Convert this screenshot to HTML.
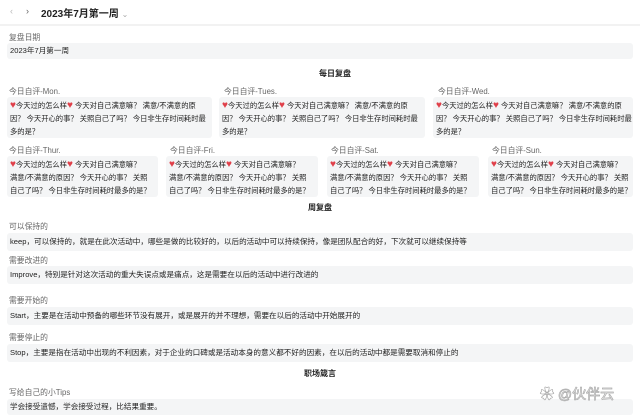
<!DOCTYPE html>
<html><head><meta charset="utf-8"><style>
*{margin:0;padding:0;box-sizing:border-box}
body{width:640px;height:415px;overflow:hidden;background:#fff;font-family:"Liberation Sans","Noto Sans CJK SC",sans-serif;color:#333;position:relative;font-size:8px}
.a{position:absolute;white-space:nowrap}
.lbl{color:#666;font-size:7.8px}
.box{position:absolute;background:#f4f5f6;border-radius:3px;font-size:7.3px;line-height:13px;padding:2px 3px;color:#222;white-space:nowrap;overflow:hidden}
.h{position:absolute;left:0;width:640px;text-align:center;font-weight:bold;font-size:8px;color:#222}
.r{color:#e0404a;font-size:10px;line-height:10px}
.s{position:absolute;left:7px;width:626px;height:18px;background:#f4f5f6;border-radius:3px;font-size:7.6px;line-height:18px;padding-left:3px;color:#222}
</style></head><body>
<div class="a" style="left:10px;top:6px;color:#bbb;font-size:9px">‹</div>
<div class="a" style="left:26px;top:6px;color:#666;font-size:9px">›</div>
<div class="a" style="left:41px;top:5px;font-weight:bold;font-size:10px;color:#222">2023年7月第一周 <span style="color:#aaa;font-weight:normal;font-size:8px">⌄</span></div>
<div style="position:absolute;left:0;top:24px;width:640px;height:2px;background:#f2f2f2"></div>
<div class="a lbl" style="left:9px;top:32px">复盘日期</div>
<div class="s" style="top:43px;height:16px;line-height:16px">2023年7月第一周</div>
<div class="h" style="top:68px;padding-left:30px">每日复盘</div>

<div class="a lbl" style="left:9px;top:86px">今日自评-Mon.</div>
<div class="a lbl" style="left:224px;top:86px">今日自评-Tues.</div>
<div class="a lbl" style="left:438px;top:86px">今日自评-Wed.</div>
<div class="box" style="left:7px;top:97px;width:205px;height:41px"><span class="r">♥</span>今天过的怎么样<span class="r">♥</span> 今天对自己满意嘛？ 满意/不满意的原<br>因？ 今天开心的事？ 关照自己了吗？ 今日非生存时间耗时最<br>多的是？</div>
<div class="box" style="left:219px;top:97px;width:206px;height:41px"><span class="r">♥</span>今天过的怎么样<span class="r">♥</span> 今天对自己满意嘛？ 满意/不满意的原<br>因？ 今天开心的事？ 关照自己了吗？ 今日非生存时间耗时最<br>多的是？</div>
<div class="box" style="left:433px;top:97px;width:200px;height:41px"><span class="r">♥</span>今天过的怎么样<span class="r">♥</span> 今天对自己满意嘛？ 满意/不满意的原<br>因？ 今天开心的事？ 关照自己了吗？ 今日非生存时间耗时最<br>多的是？</div>

<div class="a lbl" style="left:9px;top:145px">今日自评-Thur.</div>
<div class="a lbl" style="left:170px;top:145px">今日自评-Fri.</div>
<div class="a lbl" style="left:331px;top:145px">今日自评-Sat.</div>
<div class="a lbl" style="left:492px;top:145px">今日自评-Sun.</div>
<div class="box" style="left:7px;top:156px;width:151px;height:41px"><span class="r">♥</span>今天过的怎么样<span class="r">♥</span> 今天对自己满意嘛？<br>满意/不满意的原因？ 今天开心的事？ 关照<br>自己了吗？ 今日非生存时间耗时最多的是？</div>
<div class="box" style="left:166px;top:156px;width:152px;height:41px"><span class="r">♥</span>今天过的怎么样<span class="r">♥</span> 今天对自己满意嘛？<br>满意/不满意的原因？ 今天开心的事？ 关照<br>自己了吗？ 今日非生存时间耗时最多的是？</div>
<div class="box" style="left:327px;top:156px;width:152px;height:41px"><span class="r">♥</span>今天过的怎么样<span class="r">♥</span> 今天对自己满意嘛？<br>满意/不满意的原因？ 今天开心的事？ 关照<br>自己了吗？ 今日非生存时间耗时最多的是？</div>
<div class="box" style="left:488px;top:156px;width:145px;height:41px"><span class="r">♥</span>今天过的怎么样<span class="r">♥</span> 今天对自己满意嘛？<br>满意/不满意的原因？ 今天开心的事？ 关照<br>自己了吗？ 今日非生存时间耗时最多的是？</div>

<div class="h" style="top:202px">周复盘</div>
<div class="a lbl" style="left:9px;top:221px">可以保持的</div>
<div class="s" style="top:233px">keep，可以保持的，就是在此次活动中，哪些是做的比较好的，以后的活动中可以持续保持，像是团队配合的好，下次就可以继续保持等</div>
<div class="a lbl" style="left:9px;top:255px">需要改进的</div>
<div class="s" style="top:266px">Improve，特别是针对这次活动的重大失误点或是痛点，这是需要在以后的活动中进行改进的</div>
<div class="a lbl" style="left:9px;top:295px">需要开始的</div>
<div class="s" style="top:307px">Start，主要是在活动中预备的哪些环节没有展开，或是展开的并不理想，需要在以后的活动中开始展开的</div>
<div class="a lbl" style="left:9px;top:332px">需要停止的</div>
<div class="s" style="top:344px">Stop，主要是指在活动中出现的不利因素，对于企业的口碑或是活动本身的意义都不好的因素，在以后的活动中都是需要取消和停止的</div>
<div class="h" style="top:368px">职场箴言</div>
<div class="a lbl" style="left:9px;top:387px">写给自己的小Tips</div>
<div class="s" style="top:399px;height:16px;line-height:16px">学会接受遗憾，学会接受过程，比结果重要。</div>
<div class="a" style="left:540px;top:384px;font-size:14px;color:#fff;-webkit-text-stroke:0.7px #aaa">&#10047; @伙伴云</div>
</body></html>
